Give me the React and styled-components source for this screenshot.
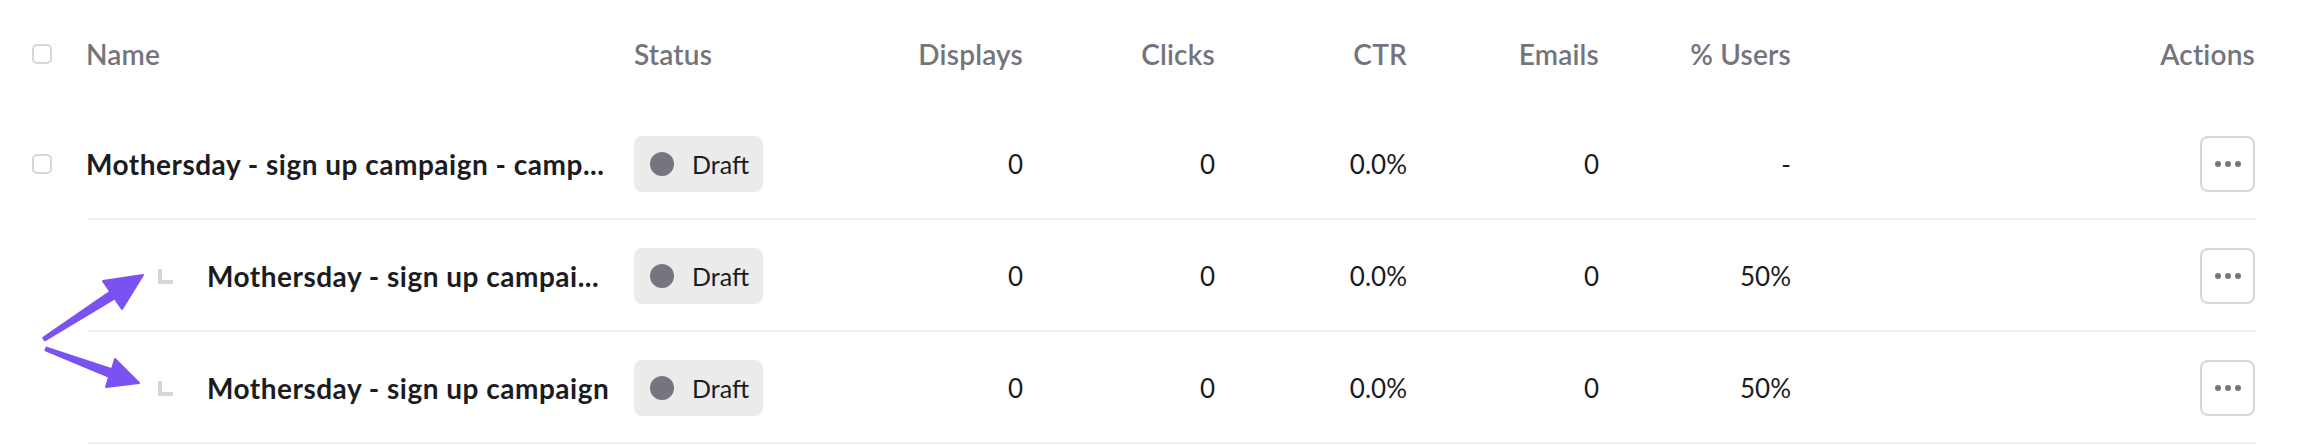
import React from "react";
import styled, { createGlobalStyle } from "styled-components";

const GlobalStyle = createGlobalStyle`
  body {
    margin: 0;
    background: #fff;
    font-family: Lato, "Liberation Sans", sans-serif;
  }
`;

// checkbox | name | status | displays | clicks | ctr | emails | users | actions
const COLS = "54px 548px 197px repeat(5, 192px) 464px";

const Page = styled.div`
  position: relative;
  width: 2318px;
  box-sizing: border-box;
  padding: 0 63px 0 32px;
`;

const HeaderRow = styled.div`
  display: grid;
  grid-template-columns: ${COLS};
  align-items: center;
  height: 108px;
  color: #74747d;
  font-size: 28px;
  font-weight: 600;
  letter-spacing: 0.2px;
`;

const Row = styled.div`
  display: grid;
  grid-template-columns: ${COLS};
  align-items: center;
  height: 112px;
  background: linear-gradient(#efeff0, #efeff0) no-repeat right bottom / calc(100% - 56px) 2px;
`;

const Cell = styled.div`
  text-align: ${(p) => (p.$right ? "right" : "left")};
  font-size: 26px;
  color: #1c1c1f;
  white-space: nowrap;
`;

const HeadCell = styled.div`
  text-align: ${(p) => (p.$right ? "right" : "left")};
  white-space: nowrap;
`;

const Checkbox = styled.span`
  display: block;
  width: 20px;
  height: 20px;
  box-sizing: border-box;
  border: 2px solid #d6d6dc;
  border-radius: 5px;
`;

const NameCell = styled.div`
  display: flex;
  align-items: center;
  min-width: 0;
  padding-left: ${(p) => (p.$child ? "72px" : "0")};
  padding-right: 16px;
`;

const Connector = styled.span`
  flex-shrink: 0;
  width: 15px;
  height: 15px;
  box-sizing: border-box;
  border-left: 4px solid #d5d5da;
  border-bottom: 4px solid #d5d5da;
  margin-right: 34px;
`;

const NameText = styled.span`
  font-size: 28px;
  font-weight: 700;
  letter-spacing: 0.5px;
  color: #1c1c1f;
  white-space: nowrap;
  overflow: hidden;
  text-overflow: ellipsis;
`;

const Pill = styled.span`
  display: inline-flex;
  align-items: center;
  height: 56px;
  padding: 0 14px 0 16px;
  background: #ebebeb;
  border-radius: 8px;
  font-size: 25px;
  color: #1c1c1f;
`;

const Dot = styled.span`
  width: 24px;
  height: 24px;
  border-radius: 50%;
  background: #75757e;
  margin-right: 18px;
`;

const ActionButton = styled.button`
  justify-self: end;
  display: flex;
  align-items: center;
  justify-content: center;
  gap: 4px;
  width: 55px;
  height: 56px;
  padding: 0;
  box-sizing: border-box;
  background: #fff;
  border: 2px solid #d6d6dc;
  border-radius: 8px;
`;

const MenuDot = styled.span`
  width: 6px;
  height: 6px;
  border-radius: 50%;
  background: #75757f;
`;

const Annotation = styled.svg`
  position: absolute;
  left: 0;
  top: 0;
  pointer-events: none;
`;

const rows = [
  { name: "Mothersday - sign up campaign - camp...", users: "-" },
  { name: "Mothersday - sign up campai...", users: "50%", child: true },
  { name: "Mothersday - sign up campaign", users: "50%", child: true },
];

export default function App() {
  return (
    <>
      <GlobalStyle />
      <Page>
        <HeaderRow>
          <Checkbox />
          <HeadCell>Name</HeadCell>
          <HeadCell>Status</HeadCell>
          <HeadCell $right>Displays</HeadCell>
          <HeadCell $right>Clicks</HeadCell>
          <HeadCell $right>CTR</HeadCell>
          <HeadCell $right>Emails</HeadCell>
          <HeadCell $right>% Users</HeadCell>
          <HeadCell $right>Actions</HeadCell>
        </HeaderRow>

        {rows.map((r, i) => (
          <Row key={i}>
            <div>{!r.child && <Checkbox />}</div>
            <NameCell $child={r.child}>
              {r.child && <Connector />}
              <NameText>{r.name}</NameText>
            </NameCell>
            <div>
              <Pill>
                <Dot />
                Draft
              </Pill>
            </div>
            <Cell $right>0</Cell>
            <Cell $right>0</Cell>
            <Cell $right>0.0%</Cell>
            <Cell $right>0</Cell>
            <Cell $right>{r.users}</Cell>
            <ActionButton>
              <MenuDot />
              <MenuDot />
              <MenuDot />
            </ActionButton>
          </Row>
        ))}

        <Annotation width="160" height="400" viewBox="0 0 160 400">
          <g fill="#7b52f2" stroke="#7b52f2" strokeWidth="2" strokeLinejoin="round">
            <polygon points="43.2,337.7 110.3,291.6 103,281 143,275 122,309 114.7,298.4 44.8,340.3" />
            <polygon points="46.5,347.6 111.9,369.2 115,359 139,383 106,387 109.1,376.8 45.5,350.4" />
          </g>
        </Annotation>
      </Page>
    </>
  );
}
